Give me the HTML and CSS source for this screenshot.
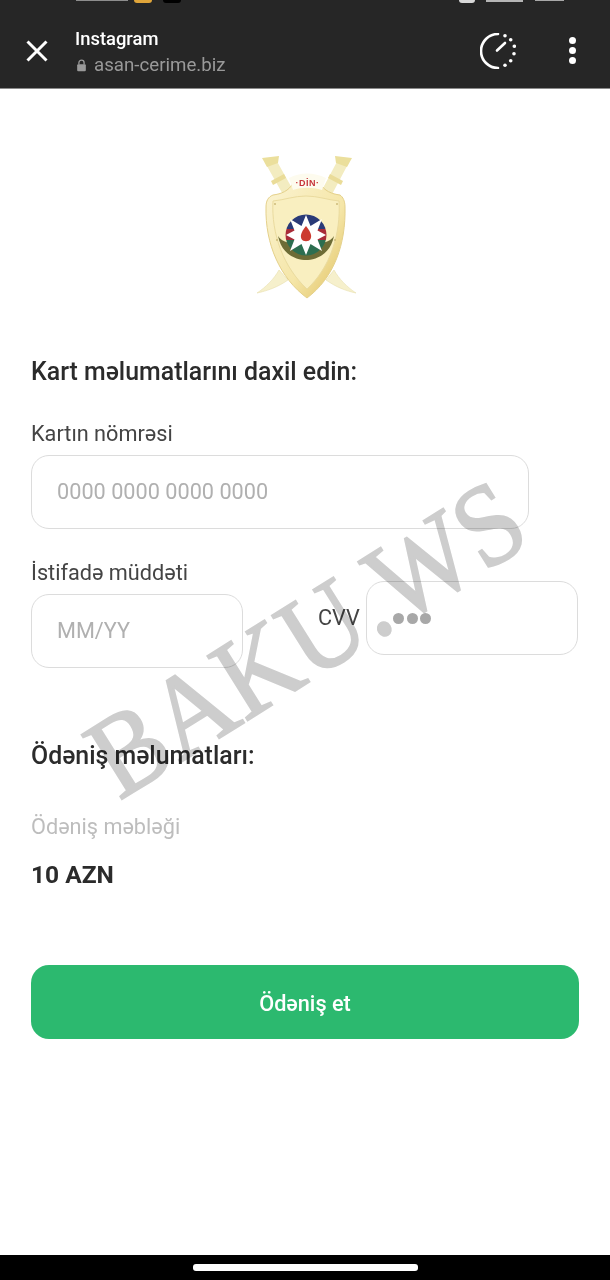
FILE: index.html
```html
<!DOCTYPE html>
<html lang="az">
<head>
<meta charset="utf-8">
<title>asan-cerime.biz</title>
<link rel="stylesheet" href="styles.css">
</head>
<body>
<div class="screen">
  <header class="topbar">
    <div class="status">
      <div class="status-left">
        <span class="clock"></span>
        <span class="emoji"></span>
        <span class="blackdot"></span>
      </div>
      <div class="status-right">
        <span class="alarm"></span>
        <span class="signal"></span>
        <span class="battery"></span>
      </div>
    </div>
    <div class="browser">
      <svg class="close" viewBox="0 0 22 22"><path d="M1.500 1.500 L20.500 20.500 M20.500 1.500 L1.500 20.500" /></svg>
      <div class="titles">
        <div class="site-title">Instagram</div>
        <div class="site-url">
          <svg class="lock" viewBox="0 0 10 12"><path d="M2.600 5V3.400a2.400 2.400 0 0 1 4.800 0V5" fill="none" stroke="#9a9a9a" stroke-width="1.200"/><rect x="1" y="4.800" width="8" height="6.600" rx="1" fill="#9a9a9a"/></svg>
          <span>asan-cerime.biz</span>
        </div>
      </div>
      <svg class="timer" viewBox="0 0 36 36">
        <path d="M18 1 A17 17 0 0 0 18 35" fill="none" stroke="#fff" stroke-width="2.600" stroke-linecap="round"/>
        <path d="M17 17.500 L25 10" fill="none" stroke="#fff" stroke-width="2.600" stroke-linecap="round"/>
        <g fill="#fff"><circle cx="25" cy="2.700" r="1.800"/><circle cx="30.700" cy="6.700" r="1.800"/><circle cx="34.300" cy="13.300" r="1.800"/><circle cx="34" cy="20.700" r="1.800"/><circle cx="30.700" cy="27.700" r="1.800"/><circle cx="25" cy="32.300" r="1.800"/></g>
      </svg>
      <div class="menu"><i></i><i></i><i></i></div>
    </div>
  </header>

  <main class="content">
    <div class="logo-wrap">
      <svg class="logo" viewBox="0 0 102 146">
        <defs>
          <linearGradient id="gold" x1="0" y1="0" x2="1" y2="1">
            <stop offset="0" stop-color="#fbf4d4"/>
            <stop offset=".6" stop-color="#f5e6a8"/>
            <stop offset="1" stop-color="#dfbf5e"/>
          </linearGradient>
          <linearGradient id="ring" x1="0" y1="0" x2="0" y2="1">
            <stop offset=".36" stop-color="#2a3a78"/>
            <stop offset=".36" stop-color="#a82c38"/>
            <stop offset=".62" stop-color="#a82c38"/>
            <stop offset=".62" stop-color="#2c6e50"/>
          </linearGradient>
        </defs>
        <path d="M1 139 C10 133 18 125 23 116 L32 126 C22 133 11 137 1 139 Z" fill="#f6f0cc" stroke="#e8dfae" stroke-width=".6"/>
        <path d="M100 139 C91 133 83 125 78 116 L70 126 C80 133 90 137 100 139 Z" fill="#f6f0cc" stroke="#e8dfae" stroke-width=".6"/>
        <path d="M15 8 L33 40" stroke="#f3ecc0" stroke-width="11" fill="none"/>
        <path d="M87 8 L70 40" stroke="#f3ecc0" stroke-width="11" fill="none"/>
        <path d="M6 4 L23 2 L22 9 L11 13 Z" fill="#ebdf9c"/>
        <path d="M96 4 L79 2 L80 9 L91 13 Z" fill="#ebdf9c"/>
        <path d="M15 27 L28 20 L30 24 L17 31 Z" fill="#eadc98"/>
        <path d="M87 27 L74 20 L72 24 L85 31 Z" fill="#eadc98"/>
        <path d="M10 53 C10 47 12 43 17 41 C25 40 33 37 37 29 C45 22 56 22 64 29 C68 37 76 40 84 41 C87 43 89 47 89 53 C90 90 78 124 51 144 C24 124 9 90 10 53 Z" fill="url(#gold)" stroke="#e4d08a" stroke-width="1"/>
        <path d="M17 47 C28 46 38 42 50 42 C62 42 72 46 83 47 C85 80 74 114 51 135 C28 114 15 80 17 47 Z" fill="#f9efc0" stroke="#eadb9f" stroke-width="1"/>
        <path d="M33 24 C44 18 58 18 70 24 L66 36 C56 33 46 33 37 36 Z" fill="#fdfbee"/>
        <text class="din" x="51.500" y="32" text-anchor="middle">·DİN·</text>
        <path d="M22 82 C26 102 42 106 50 106 C58 106 74 102 78 82 C72 94 28 94 22 82 Z" fill="#6d6c36"/>
        <circle cx="50" cy="81" r="20.500" fill="url(#ring)"/>
        <polygon points="50,61 54.500,72 66,65 61.500,76.500 70,81 61.500,85.500 66,97 54.500,90 50,101 45.500,90 34,97 38.500,85.500 30,81 38.500,76.500 34,65 45.500,72" fill="#fff"/>
        <path d="M50 72 C55 78 56 82 54.500 85 C53 88 47 88 45.500 85 C44 82 45 78 50 72 Z" fill="#cc3a2f"/>
        <g fill="#cdbb7a"><circle cx="19" cy="50" r="1"/><circle cx="81" cy="50" r="1"/><circle cx="21" cy="86" r="1"/><circle cx="79" cy="86" r="1"/></g>
      </svg>
    </div>

    <h2 class="heading first-heading">Kart məlumatlarını daxil edin:</h2>
    <label class="label card-label">Kartın nömrəsi</label>
    <div class="field card-field"><span class="placeholder">0000 0000 0000 0000</span></div>

    <label class="label exp-label">İstifadə müddəti</label>
    <div class="exp-row">
      <div class="field exp-field"><span class="placeholder">MM/YY</span></div>
      <span class="cvv-label">CVV</span>
      <div class="field cvv-field"><span class="dots"><i></i><i></i><i></i></span></div>
    </div>

    <h2 class="heading pay-heading">Ödəniş məlumatları:</h2>
    <div class="amount-label">Ödəniş məbləği</div>
    <div class="amount">10 AZN</div>
    <button class="pay" type="button">Ödəniş et</button>
  </main>

  <div class="watermark">BAKU.WS</div>

  <footer class="navbar"><span class="home"></span></footer>
</div>
</body>
</html>
```
FILE: styles.css
```css
* { box-sizing: border-box; }
html, body { margin: 0; padding: 0; }
body { background: #fff; font-family: Roboto, "Noto Sans", sans-serif; }
.screen { position: relative; width: 610px; height: 1280px; overflow: hidden; display: flex; flex-direction: column; background: #fff; }

.topbar { height: 89px; flex: none; background: #262626; border-bottom: 1px solid #8a8a8a; }
.status { height: 3px; display: flex; justify-content: space-between; padding: 0 46px 0 76px; overflow: hidden; }
.status-left, .status-right { display: flex; align-items: flex-start; }
.clock { width: 52px; height: 1px; background: #8d8d8d; margin-right: 6px; }
.emoji { width: 18px; height: 3px; background: #e0a53a; border-radius: 0 0 8px 8px; margin-right: 11px; }
.blackdot { width: 18px; height: 3px; background: #000; border-radius: 0 0 6px 6px; }
.alarm { width: 16px; height: 3px; background: #d8d8d8; border-radius: 0 0 7px 7px; margin-right: 11px; }
.signal { width: 37px; height: 2px; background: #b5b5b5; margin-right: 12px; }
.battery { width: 29px; height: 1px; background: #a8a8a8; }

.browser { height: 85px; display: flex; align-items: center; padding: 10px 34px 0 26px; }
.close { width: 22px; height: 22px; flex: none; stroke: #fff; stroke-width: 3; fill: none; }
.titles { margin: 5px 0 0 27px; flex: 1; }
.site-title { color: #fff; font-size: 18.400px; font-weight: 500; line-height: 22px; }
.site-url { display: flex; align-items: center; gap: 7px; color: #999; font-size: 18.700px; line-height: 26px; margin-top: 2px; }
.lock { width: 11px; height: 13px; flex: none; margin-left: 1px; }
.timer { width: 36px; height: 36px; flex: none; margin-right: 53px; }
.menu { display: flex; flex-direction: column; gap: 3px; }
.menu i { width: 7px; height: 7px; border-radius: 50%; background: #fff; }

.content { flex: 1; padding: 0 31px; }
.logo-wrap { display: flex; justify-content: center; padding: 65px 0 0 4px; height: 210px; }
.logo { width: 102px; height: 146px; filter: blur(.5px); }
.din { font: 700 9px "Liberation Sans", sans-serif; fill: #c6343a; letter-spacing: .5px; }

.heading { margin: 0; color: #2b2b2b; font-size: 24.900px; font-weight: 500; line-height: 28px; }
.first-heading { margin-top: 59px; }
.label { display: block; color: #444; font-size: 21.700px; line-height: 26px; }
.card-label { margin-top: 35px; }
.field { border: 1px solid #dcdcdc; border-radius: 18px; height: 74px; display: flex; align-items: center; padding: 0 0 2px 25px; }
.card-field { width: 498px; margin-top: 8px; }
.placeholder { color: #b0b0b0; font-size: 21.700px; }
.exp-label { margin-top: 31px; }
.exp-row { display: flex; align-items: flex-start; margin-top: 8px; }
.exp-field { width: 212px; }
.cvv-label { color: #444; font-size: 21.700px; line-height: 26px; margin: 11px 0 0 75px; width: 0; white-space: nowrap; }
.cvv-field { width: 212px; margin: -13px 0 0 48px; padding: 0 0 0 26px; }
.dots { display: flex; gap: 2.500px; }
.dots i { width: 11px; height: 11px; border-radius: 50%; background: #a8a8a8; }

.pay-heading { margin-top: 74px; }
.amount-label { color: #bdbdbd; font-size: 21.700px; line-height: 26px; margin-top: 44px; }
.amount { color: #2b2b2b; font-size: 24.500px; font-weight: 700; line-height: 30px; margin-top: 20px; }
.pay { display: block; width: 548px; height: 74px; margin-top: 75px; padding: 2px 0 0; border: 0; border-radius: 18px; background: #2cb96f; color: #fff; font: 500 21.700px Roboto, "Noto Sans", sans-serif; }

.watermark { position: absolute; left: 36px; top: 588px; width: 540px; text-align: center; font: 116px/100px "Liberation Serif", serif; color: #cdcdcd; -webkit-text-stroke: 2px #cdcdcd; mix-blend-mode: multiply; transform: rotate(-32deg) scaleX(.92); white-space: nowrap; pointer-events: none; }

.navbar { height: 25px; flex: none; background: #000; display: flex; justify-content: center; padding-top: 9px; }
.home { width: 225px; height: 7px; border-radius: 3px; background: #fff; }
```
